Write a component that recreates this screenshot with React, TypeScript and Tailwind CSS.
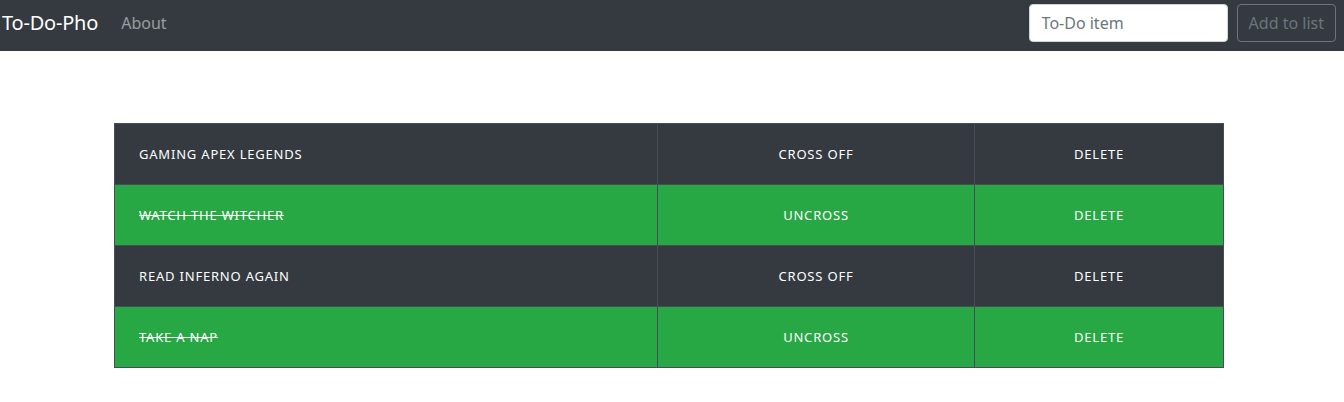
import { useState } from "react";

type Todo = { id: number; text: string; done: boolean };

const initial: Todo[] = [
  { id: 1, text: "Gaming Apex Legends", done: false },
  { id: 2, text: "Watch the Witcher", done: true },
  { id: 3, text: "Read Inferno again", done: false },
  { id: 4, text: "Take a nap", done: true },
];

export default function App() {
  const [todos, setTodos] = useState(initial);
  const [draft, setDraft] = useState("");

  const toggle = (id: number) =>
    setTodos((list) => list.map((t) => (t.id === id ? { ...t, done: !t.done } : t)));
  const remove = (id: number) => setTodos((list) => list.filter((t) => t.id !== id));
  const add = () => {
    if (!draft.trim()) return;
    setTodos((list) => [...list, { id: Date.now(), text: draft, done: false }]);
    setDraft("");
  };

  return (
    <div className="min-h-screen bg-white font-['Noto_Sans',sans-serif]">
      <nav className="flex h-[51px] items-center justify-between bg-[#343a40] pb-[5px] pl-[2px] pr-[8px]">
        <div className="flex items-center">
          <span className="text-[20px] leading-[30px] tracking-[-0.2px] text-white">To-Do-Pho</span>
          <a className="ml-[23px] text-[16px] text-white/50">About</a>
        </div>
        <div className="flex items-center gap-[9px]">
          <input
            value={draft}
            onChange={(e) => setDraft(e.target.value)}
            placeholder="To-Do item"
            className="h-[38px] w-[199px] rounded-[4px] border border-[#ced4da] bg-white px-[12px] text-[16px] text-[#495057] placeholder:text-[#6c757d] outline-none"
          />
          <button
            type="button"
            onClick={add}
            className="h-[38px] rounded-[4px] border border-[#6c757d] px-[11px] text-[16px] text-[#6c757d]"
          >
            Add to list
          </button>
        </div>
      </nav>

      <div className="ml-[114px] mt-[72px] w-[1110px]">
        <table className="w-full border-collapse text-[13px] uppercase tracking-[0.8px] text-white">
          <tbody>
            {todos.map((t) => {
              const row = t.done ? "bg-[#28a745]" : "bg-[#343a40]";
              return (
                <tr key={t.id} className={`h-[61px] ${row}`}>
                  <td className="w-[543px] border border-[#454d55] pl-[24px] pt-[2px]">
                    <span className={t.done ? "line-through" : ""}>{t.text}</span>
                  </td>
                  <td
                    className="w-[317px] cursor-pointer border border-[#454d55] pt-[2px] text-center"
                    onClick={() => toggle(t.id)}
                  >
                    {t.done ? "Uncross" : "Cross off"}
                  </td>
                  <td
                    className="cursor-pointer border border-[#454d55] pt-[2px] text-center"
                    onClick={() => remove(t.id)}
                  >
                    Delete
                  </td>
                </tr>
              );
            })}
          </tbody>
        </table>
      </div>
    </div>
  );
}
